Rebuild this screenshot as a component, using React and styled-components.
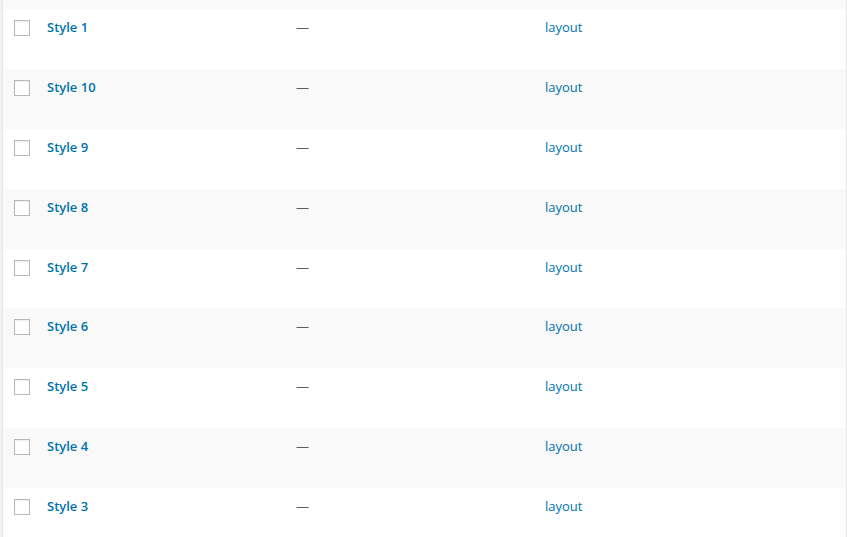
import React from "react";
import styled, { createGlobalStyle } from "styled-components";

const GlobalStyle = createGlobalStyle`
  html, body {
    margin: 0;
    padding: 0;
    background: #f1f1f1;
    overflow: hidden;
  }
  body {
    font-family: "Open Sans", "Noto Sans", sans-serif;
    font-size: 13px;
    color: #32373c;
  }
`;

const ListTable = styled.div`
  margin-left: 2px;
  width: 843px;
  height: 537px;
  overflow: hidden;
  background: #fff;
  border-left: 1px solid #e5e5e5;
  border-right: 1px solid #e5e5e5;
`;

const Row = styled.div`
  display: grid;
  grid-template-columns: 34px 249px 249px 1fr;
  height: ${props => props.height || "59.875px"};
  background: ${props => (props.alt ? "#f9f9f9" : "#fff")};
`;

const CheckCell = styled.div`
  padding: 11px 0 0 11px;
`;

const Checkbox = styled.span`
  display: block;
  width: 16px;
  height: 16px;
  box-sizing: border-box;
  border: 1px solid #b4b9be;
  background: #fff;
  box-shadow: inset 0 1px 2px rgba(0, 0, 0, 0.07);
`;

const Cell = styled.div`
  padding: 9px 10px 0;
  line-height: 19px;
`;

const TitleLink = styled.a`
  color: #0073aa;
  font-weight: 600;
  font-size: 13px;
  text-decoration: none;
`;

const Dash = styled.span`
  color: #555d66;
`;

const TagLink = styled.a`
  color: #0073aa;
  text-decoration: none;
`;

const styles = ["Style 1", "Style 10", "Style 9", "Style 8", "Style 7", "Style 6", "Style 5", "Style 4", "Style 3"];

export default function App() {
  return (
    <>
      <GlobalStyle />
      <ListTable>
        <Row alt height="9px" />
        {styles.map((name, i) => (
          <Row key={name} alt={i % 2 === 1}>
            <CheckCell>
              <Checkbox />
            </CheckCell>
            <Cell>
              <TitleLink href="#">{name}</TitleLink>
            </Cell>
            <Cell>
              <Dash>—</Dash>
            </Cell>
            <Cell>
              <TagLink href="#">layout</TagLink>
            </Cell>
          </Row>
        ))}
      </ListTable>
    </>
  );
}
